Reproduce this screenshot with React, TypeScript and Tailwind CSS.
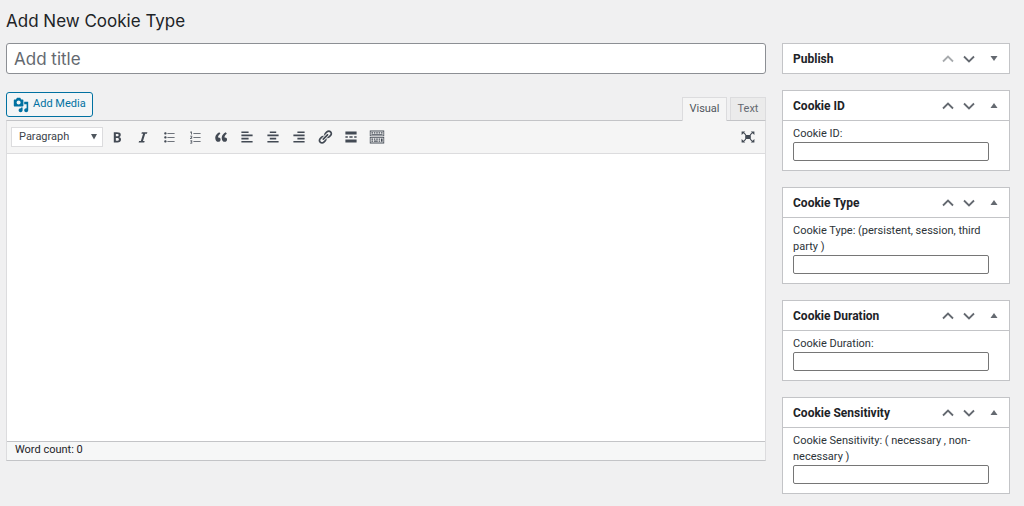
import React from 'react';

interface IconProps {
  path: string;
  className?: string;
}

const Icon: React.FC<IconProps> = ({ path, className = 'w-4 h-4' }) => (
  <svg viewBox="0 0 20 20" fill="currentColor" className={className} aria-hidden="true">
    <path d={path} />
  </svg>
);

const MEDIA_ICON =
  'M13 11V4c0-.55-.45-1-1-1h-1.67L9 1H5L3.67 3H2c-.55 0-1 .45-1 1v7c0 .55.45 1 1 1h10c.55 0 1-.45 1-1zM7 4.5c1.38 0 2.5 1.12 2.5 2.5S8.38 9.5 7 9.5 4.5 8.38 4.5 7 5.62 4.5 7 4.5zM14 6h5v10.5c0 1.38-1.12 2.5-2.5 2.5S14 17.88 14 16.5s1.12-2.5 2.5-2.5c.17 0 .34.02.5.05V9h-3V6zm-4 8.05V13h2v3.5c0 1.38-1.12 2.5-2.5 2.5S7 17.88 7 16.5 8.12 14 9.5 14c.17 0 .34.02.5.05z';

const FULLSCREEN_ICON =
  'M2 3h4.500L5.200 4.300 7.800 6.800 6.800 7.800 4.300 5.200 2 7.500zM18 3v4.500l-2.300-2.300-2.500 2.600-1-1 2.600-2.500L13.500 3zM2 17v-4.500l2.300 2.300 2.500-2.600 1 1-2.600 2.500L6.500 17zM18 17h-4.500l1.300-1.300-2.600-2.500 1-1 2.500 2.600 2.300-2.300zM6.500 7.500h7v5h-7z';

const toolbarButtons = [
  {
    label: 'Bold',
    path: 'M6 4v13h4.54c1.37 0 2.46-.33 3.26-1 .8-.66 1.2-1.58 1.2-2.77 0-.84-.17-1.51-.51-2.01s-.9-.85-1.67-1.03v-.09c.57-.1 1.02-.4 1.36-.9s.51-1.13.51-1.91c0-1.14-.39-1.98-1.17-2.5C12.75 4.26 11.5 4 9.78 4H6zm2.57 5.15V6.26h1.36c.73 0 1.27.11 1.61.32.34.22.51.58.51 1.07 0 .54-.16.92-.47 1.15s-.82.35-1.51.35h-1.5zm0 2.19h1.6c1.44 0 2.16.53 2.16 1.61 0 .6-.17 1.05-.51 1.34s-.86.43-1.57.43H8.57v-3.38z',
  },
  {
    label: 'Italic',
    path: 'M15.500 4l-.6 2h-2.100l-2.800 9h2.100l-.6 2H4.500l.6-2h2.200l2.800-9H8l.6-2z',
  },
  {
    label: 'Bulleted list',
    path: 'M5.5 7C4.67 7 4 6.33 4 5.5 4 4.68 4.67 4 5.5 4 6.32 4 7 4.68 7 5.500 7 6.33 6.32 7 5.5 7zM8 5h9v1H8V5zm-2.5 7c-.83 0-1.5-.67-1.5-1.5C4 9.68 4.67 9 5.5 9c.82 0 1.5.68 1.5 1.5 0 .83-.68 1.5-1.5 1.5zM8 10h9v1H8v-1zm-2.5 7c-.83 0-1.5-.67-1.5-1.5 0-.82.67-1.5 1.5-1.5.82 0 1.5.68 1.5 1.5 0 .83-.68 1.5-1.5 1.5zM8 15h9v1H8v-1z',
  },
  {
    label: 'Numbered list',
    path: 'M4 3.500L5.200 3H6v4H5V4.300L4 4.600zM8 5h9v1H8zM4 8.500h2.500v2L5 11.800h1.500v.8H3.800v-.8l1.900-1.700v-.8H4zM8 10h9v1H8zM4 14h2.500v4H3.900v-.8h1.700v-.8H4.300v-.8h1.300v-.8H4zM8 15h9v1H8z',
  },
  {
    label: 'Blockquote',
    path: 'M9.49 13.22c0-.74-.2-1.38-.61-1.9-.62-.78-1.83-.88-2.53-.72-.29-1.65 1.11-3.75 2.92-4.65L7.88 4c-2.73 1.3-5.42 4.28-4.96 8.05C3.21 14.43 4.59 16 6.54 16c.85 0 1.56-.25 2.12-.75s.83-1.18.83-2.03zm8.05 0c0-.74-.2-1.38-.61-1.9-.63-.78-1.83-.88-2.53-.72-.29-1.65 1.11-3.75 2.92-4.65L15.93 4c-2.73 1.3-5.41 4.28-4.95 8.05.29 2.38 1.66 3.95 3.61 3.95.85 0 1.56-.25 2.12-.75s.83-1.18.83-2.03z',
  },
  { label: 'Align left', path: 'M12 5V3H3v2h9zm5 4V7H3v2h14zm-5 4v-2H3v2h9zm5 4v-2H3v2h14z' },
  { label: 'Align center', path: 'M14 5V3H6v2h8zm3 4V7H3v2h14zm-3 4v-2H6v2h8zm3 4v-2H3v2h14z' },
  { label: 'Align right', path: 'M17 5V3H8v2h9zm0 4V7H3v2h14zm0 4v-2H8v2h9zm0 4v-2H3v2h14z' },
  {
    label: 'Insert link',
    path: 'M17.74 2.76c1.68 1.69 1.68 4.41 0 6.1l-1.53 1.52c-1.12 1.12-2.7 1.47-4.14 1.09l2.62-2.61.76-.77.76-.76c.84-.84.84-2.2 0-3.04-.84-.85-2.2-.85-3.04 0l-.77.76-3.38 3.38c-.37-1.44-.02-3.02 1.1-4.14l1.52-1.53c1.69-1.68 4.42-1.68 6.1 0zM8.59 13.43l5.34-5.34c.42-.42.42-1.1 0-1.52-.44-.43-1.13-.39-1.53 0l-5.33 5.34c-.42.42-.42 1.1 0 1.52.44.43 1.13.39 1.52 0zm-.76 2.29l4.14-4.15c.38 1.44.03 3.02-1.09 4.14l-1.52 1.53c-1.69 1.68-4.41 1.68-6.1 0-1.68-1.68-1.68-4.42 0-6.1l1.53-1.52c1.12-1.12 2.7-1.47 4.14-1.1l-4.14 4.15c-.85.84-.85 2.2 0 3.05.84.84 2.2.84 3.04 0z',
  },
  {
    label: 'Insert Read More tag',
    path: 'M17 7V3H3v4h14zM6 11V9H3v2h3zm6 0V9H8v2h4zm5 0V9h-3v2h3zm0 6v-4H3v4h14z',
  },
  {
    label: 'Toolbar Toggle',
    path: 'M1 2h18v7H1zM2 3v5h16V3zM3 4h2v1.500H3zM6 4h2v1.500H6zM9 4h2v1.500H9zM12 4h2v1.500h-2zM15 4h2v1.500h-2zM3 6.200h14v1H3zM1 10h18v8H1zM2 11v6h16v-6zM3 12h2v1.500H3zM6 12h2v1.500H6zM9 12h2v1.500H9zM12 12h2v1.500h-2zM15 12h2v4h-2zM3 14.500h2V16H3zM6 14.500h5V16H6zM12 14.500h2V16h-2z',
  },
];

const metaBoxes = [
  { id: 'cookie-id', title: 'Cookie ID', label: 'Cookie ID:' },
  { id: 'cookie-type', title: 'Cookie Type', label: 'Cookie Type: (persistent, session, third party )' },
  { id: 'cookie-duration', title: 'Cookie Duration', label: 'Cookie Duration:' },
  { id: 'cookie-sensitivity', title: 'Cookie Sensitivity', label: 'Cookie Sensitivity: ( necessary , non-necessary )' },
];

interface MetaBoxProps {
  title: string;
  first?: boolean;
  children?: React.ReactNode;
}

const MetaBox: React.FC<MetaBoxProps> = ({ title, first, children }) => (
  <section className="border border-[#c3c4c7] bg-white">
    <div className="flex h-[29px] items-center pl-[10px] pr-1">
      <h2 className="flex-1 text-xs font-bold text-[#1d2327]">{title}</h2>
      <div className="flex items-center text-[#646970]">
        <button
          type="button"
          aria-label="Move up"
          className={`flex h-6 w-[21px] items-center justify-center ${first ? 'text-[#a7aaad]' : ''}`}
        >
          <svg viewBox="0 0 12 8" className="h-2 w-3" fill="none" stroke="currentColor" strokeWidth="1.8">
            <path d="M1 6.500 6 1.500l5 5" />
          </svg>
        </button>
        <button type="button" aria-label="Move down" className="flex h-6 w-[21px] items-center justify-center">
          <svg viewBox="0 0 12 8" className="h-2 w-3" fill="none" stroke="currentColor" strokeWidth="1.8">
            <path d="M1 1.500l5 5 5-5" />
          </svg>
        </button>
        <button type="button" aria-label="Toggle panel" className="ml-1 flex h-6 w-[22px] items-center justify-center">
          <svg viewBox="0 0 8 6" className="h-[6px] w-2" fill="currentColor">
            <path d={children ? 'M4 0l3.500 5h-7z' : 'M.5 0h7L4 5z'} />
          </svg>
        </button>
      </div>
    </div>
    {children && <div className="border-t border-[#c3c4c7] px-[10px] pt-[5px] pb-[9px]">{children}</div>}
  </section>
);

const Editor: React.FC = () => (
  <div>
    <div className="flex items-end justify-between">
      <button
        type="button"
        className="mb-[3px] flex h-[25px] items-center gap-1 rounded-[3px] border border-[#0071a1] bg-[#f3f5f6] px-[6px] text-[11px] text-[#0071a1]"
      >
        <Icon path={MEDIA_ICON} />
        Add Media
      </button>
      <div className="flex gap-[3px]">
        <button
          type="button"
          className="relative -mb-px h-6 w-[45px] border border-b-0 border-[#dcdcde] bg-[#f5f5f5] text-[11px] text-[#50575e]"
        >
          Visual
        </button>
        <button
          type="button"
          className="h-[23px] w-9 border border-b-0 border-[#dcdcde] bg-[#ebebeb] text-[11px] text-[#646970]"
        >
          Text
        </button>
      </div>
    </div>

    <div className="border border-[#dcdcde] border-t-[#c3c4c7] border-b-[#c3c4c7]">
      <div className="flex h-[33px] items-center border-b border-[#dcdcde] bg-[#f5f5f5] px-1">
        <div className="relative mr-px">
          <select
            aria-label="Format"
            className="block h-5 w-[92px] appearance-none border border-[#dcdcde] bg-white pl-[7px] text-[11px] leading-4 text-[#3c434a]"
          >
            <option>Paragraph</option>
          </select>
          <svg
            viewBox="0 0 8 6"
            className="pointer-events-none absolute right-[5px] top-[7px] h-[6px] w-2 text-[#50575e]"
            fill="currentColor"
          >
            <path d="M1 0h6L4 5.500z" />
          </svg>
        </div>
        {toolbarButtons.map((button) => (
          <button
            key={button.label}
            type="button"
            aria-label={button.label}
            className="flex h-6 w-[26px] items-center justify-center text-[#434a54]"
          >
            <Icon path={button.path} />
          </button>
        ))}
        <button
          type="button"
          aria-label="Fullscreen"
          className="ml-auto flex h-6 w-[26px] items-center justify-center text-[#434a54]"
        >
          <Icon path={FULLSCREEN_ICON} />
        </button>
      </div>
      <textarea aria-label="Content" className="block h-[287px] w-full resize-none bg-white p-2 text-xs outline-none" />
      <div className="border-t border-[#c3c4c7] bg-[#f6f7f7] px-2 pb-[2px] text-[11px] leading-4 text-[#1d2327]">
        Word count: 0
      </div>
    </div>
  </div>
);

export default function App() {
  return (
    <div className="min-h-screen bg-[#f0f0f1] pl-[6px] pr-[14px] pt-[9px] pb-3 font-['Roboto',sans-serif]">
      <h1 className="font-['Inter',sans-serif] text-[17px] leading-6 text-[#1d2327]">Add New Cookie Type</h1>
      <div className="mt-[10px] flex items-start gap-4">
        <main className="min-w-0 flex-1">
          <input
            type="text"
            aria-label="Add title"
            placeholder="Add title"
            className="mb-[18px] block h-[31px] w-full rounded-[3px] border border-[#8c8f94] bg-white px-[7px] font-['Inter',sans-serif] text-[17px] text-[#2c3338] placeholder:text-[#646970]"
          />
          <Editor />
        </main>
        <aside className="flex w-[228px] flex-none flex-col gap-4">
          <MetaBox title="Publish" first />
          {metaBoxes.map((box) => (
            <MetaBox key={box.id} title={box.title}>
              <label htmlFor={box.id} className="block text-[11px] leading-4 text-[#2c3338]">
                {box.label}
              </label>
              <input
                id={box.id}
                type="text"
                className="block h-[19px] w-[196px] rounded-[2px] border border-[#767676] bg-white px-1 text-[11px]"
              />
            </MetaBox>
          ))}
        </aside>
      </div>
    </div>
  );
}
